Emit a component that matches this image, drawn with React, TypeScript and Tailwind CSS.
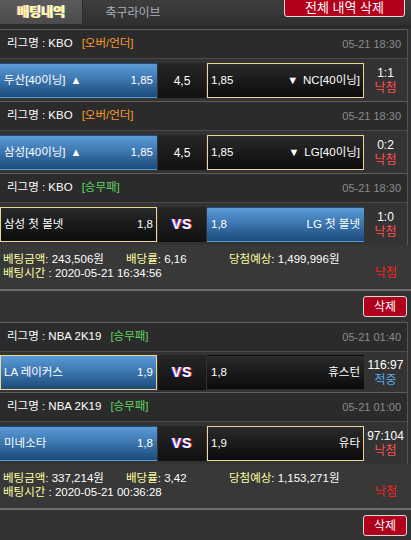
import React from "react";

type Side = {
  name: string;
  odds: string;
  arrow?: "up" | "down";
  blue?: boolean;
  picked?: boolean;
};

interface MatchProps {
  league: string;
  kind: string;
  kindColor: string;
  date: string;
  home: Side;
  mid: string;
  away: Side;
  score: string;
  result: string;
  resultColor: string;
  compact?: boolean;
}

const FONT = "[font-family:'Liberation_Sans','Noto_Sans_CJK_KR',sans-serif]";

function TeamBar({ side, isAway }: { side: Side; isAway?: boolean }) {
  const bg = side.blue
    ? "bg-gradient-to-b from-[#5b9bd8] via-[#3a74ad] to-[#1c4b7a]"
    : "bg-gradient-to-b from-[#2b2b2b] to-[#0b0b0b]";
  const border = side.picked ? "border border-[#edd594]" : "border border-transparent";
  const name = (
    <span className="flex items-center gap-[5px]">
      {isAway && side.arrow === "down" && <span className="text-[11px]">▼</span>}
      <span>{side.name}</span>
      {!isAway && side.arrow === "up" && <span className="text-[11px]">▲</span>}
    </span>
  );
  return (
    <div
      className={`flex w-[157px] h-[35px] items-center justify-between px-[3px] text-white text-[11.5px] ${bg} ${border}`}
    >
      {isAway ? (
        <>
          <span>{side.odds}</span>
          {name}
        </>
      ) : (
        <>
          {name}
          <span>{side.odds}</span>
        </>
      )}
    </div>
  );
}

function MatchBlock({
  league,
  kind,
  kindColor,
  date,
  home,
  mid,
  away,
  score,
  result,
  resultColor,
  compact,
}: MatchProps) {
  return (
    <div className="border-t border-[#5e5e5e]">
      <div className="flex h-[29px] items-center justify-between bg-[#2b2b2b] pl-[7px] pr-[6px] border-b border-[#4a4a4a]">
        <div className="flex items-center text-[11.5px] text-white">
          <span>리그명 : {league}</span>
          <span className={`ml-[9px] ${kindColor}`}>{kind}</span>
        </div>
        <span className="text-[11px] text-[#8c8c8c]">{date}</span>
      </div>
      <div
        className={`flex items-start bg-[#333333] ${compact ? "h-[40px] pt-[3px]" : "h-[42px] pt-[4px]"}`}
      >
        <TeamBar side={home} />
        <div className="ml-[1px] flex w-[48px] h-[35px] items-center justify-center bg-gradient-to-b from-[#262626] to-[#111111] text-white text-[12px]">
          {mid === "VS" ? (
            <span className="font-bold text-[14px] tracking-[1px] [text-shadow:-1px_0_#2a3cff,1px_0_#ff2a2a]">
              VS
            </span>
          ) : (
            mid
          )}
        </div>
        <div className="ml-[1px]">
          <TeamBar side={away} isAway />
        </div>
        <div className="flex flex-1 h-[35px] flex-col items-center justify-center leading-[15px] text-[12px]">
          <span className="text-white">{score}</span>
          <span className={resultColor}>{result}</span>
        </div>
      </div>
    </div>
  );
}

function SlipInfo({
  amount,
  rate,
  expect,
  time,
}: {
  amount: string;
  rate: string;
  expect: string;
  time: string;
}) {
  return (
    <>
      <div className="bg-[#383838] pl-[3px] pr-[14px] pt-[7px] pb-[9px] text-[11.5px] leading-[14px]">
        <div className="flex">
          <span className="w-[123px]">
            <span className="text-[#ffffa0]">베팅금액</span>
            <span className="text-white">: {amount}</span>
          </span>
          <span className="w-[103px]">
            <span className="text-[#ffffa0]">배당률</span>
            <span className="text-white">: {rate}</span>
          </span>
          <span>
            <span className="text-[#ffffa0]">당첨예상</span>
            <span className="text-white">: {expect}</span>
          </span>
        </div>
        <div className="flex justify-between">
          <span>
            <span className="text-[#ffffa0]">배팅시간</span>
            <span className="text-white"> : {time}</span>
          </span>
          <span className="text-[#ff2020] text-[12px]">낙첨</span>
        </div>
      </div>
      <div className="border-t-2 border-[#6e6e6e] flex justify-end pt-[5px] pb-[5px] pr-[4px] bg-[#333333]">
        <button className="h-[21px] w-[44px] rounded-[3px] border border-[#d9d9d9] bg-[#b0001c] text-white text-[12px]">
          삭제
        </button>
      </div>
    </>
  );
}

export default function App() {
  return (
    <div className={`w-[411px] h-[540px] overflow-hidden bg-[#333333] ${FONT}`}>
      <div className="flex h-[25px] bg-gradient-to-b from-[#3e3e3e] to-[#303030] relative">
        <div className="flex w-[83px] items-center justify-center bg-gradient-to-b from-[#5a5a5a] to-[#4b4b4b] border-r border-b border-[#2e2e2e] text-[13px] font-bold text-[#ffff8c] [text-shadow:-1px_0_#ff7ad0,1px_0_#7affff]">
          배팅내역
        </div>
        <div className="flex w-[100px] items-center justify-center text-[12px] text-[#a9b0be]">
          축구라이브
        </div>
        <button className="absolute right-[6px] top-[-1px] h-[18px] w-[121px] rounded-b-[3px] border border-[#dcdcdc] bg-[#b3001b] text-white text-[13px] leading-[16px]">
          전체 내역 삭제
        </button>
      </div>
      <div className="h-[4px] bg-[#2a2a2a]" />
      <div className="w-[408px] border-r border-[#555555]">
        <MatchBlock
          league="KBO"
          kind="[오버/언더]"
          kindColor="text-[#ff9a2e]"
          date="05-21 18:30"
          home={{ name: "두산[40이닝]", odds: "1,85", arrow: "up", blue: true }}
          mid="4,5"
          away={{ name: "NC[40이닝]", odds: "1,85", arrow: "down", picked: true }}
          score="1:1"
          result="낙첨"
          resultColor="text-[#ff5050]"
        />
        <MatchBlock
          league="KBO"
          kind="[오버/언더]"
          kindColor="text-[#ff9a2e]"
          date="05-21 18:30"
          home={{ name: "삼성[40이닝]", odds: "1,85", arrow: "up", blue: true }}
          mid="4,5"
          away={{ name: "LG[40이닝]", odds: "1,85", arrow: "down", picked: true }}
          score="0:2"
          result="낙첨"
          resultColor="text-[#ff5050]"
        />
        <MatchBlock
          league="KBO"
          kind="[승무패]"
          kindColor="text-[#5fd35f]"
          date="05-21 18:30"
          home={{ name: "삼성 첫 볼넷", odds: "1,8", picked: true }}
          mid="VS"
          away={{ name: "LG 첫 볼넷", odds: "1,8", blue: true }}
          score="1:0"
          result="낙첨"
          resultColor="text-[#ff5050]"
        />
      </div>
      <SlipInfo amount="243,506원" rate="6,16" expect="1,499,996원" time="2020-05-21 16:34:56" />
      <div className="w-[408px] border-r border-[#555555]">
        <MatchBlock
          league="NBA 2K19"
          kind="[승무패]"
          kindColor="text-[#5fd35f]"
          date="05-21 01:40"
          home={{ name: "LA 레이커스", odds: "1,9", blue: true, picked: true }}
          mid="VS"
          away={{ name: "휴스턴", odds: "1,8" }}
          score="116:97"
          result="적중"
          resultColor="text-[#5aa9e6]"
          compact
        />
        <MatchBlock
          league="NBA 2K19"
          kind="[승무패]"
          kindColor="text-[#5fd35f]"
          date="05-21 01:00"
          home={{ name: "미네소타", odds: "1,8", blue: true }}
          mid="VS"
          away={{ name: "유타", odds: "1,9", picked: true }}
          score="97:104"
          result="낙첨"
          resultColor="text-[#ff5050]"
        />
      </div>
      <SlipInfo amount="337,214원" rate="3,42" expect="1,153,271원" time="2020-05-21 00:36:28" />
    </div>
  );
}
